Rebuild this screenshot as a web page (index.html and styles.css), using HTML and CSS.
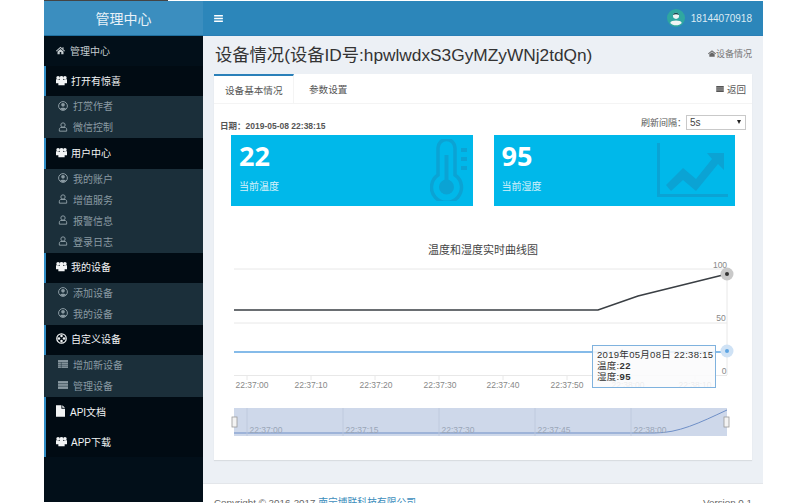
FILE: index.html
```html
<!DOCTYPE html>
<html lang="zh">
<head>
<meta charset="utf-8">
<title>设备情况</title>
<link rel="stylesheet" href="styles.css">
</head>
<body>
<svg class="defs" width="0" height="0">
  <symbol id="i-home" viewBox="0 0 12 12"><path d="M6 1 0 6.400l.8.8L6 2.800l5.200 4.400.8-.8-2-1.800V1.600H8.600v1.600zM2 7.400V11h3V8h2v3h3V7.400L6 4z" fill="currentColor"/></symbol>
  <symbol id="i-users" viewBox="0 0 14 12"><circle cx="2.600" cy="2.400" r="2.200" fill="currentColor"/><circle cx="11.400" cy="2.400" r="2.200" fill="currentColor"/><circle cx="7" cy="3" r="2.800" fill="currentColor"/><path d="M0 4.500h3.400v5H0zM10.600 4.500H14v5h-3.400zM3 5.500h8V12H3z" fill="currentColor"/></symbol>
  <symbol id="i-ucircle" viewBox="0 0 12 12"><circle cx="6" cy="6" r="5.300" fill="none" stroke="currentColor" stroke-width="1.200"/><circle cx="6" cy="4.600" r="2.200" fill="currentColor"/><path d="M2.400 9.600C3 7.600 9 7.600 9.600 9.600 8 11.200 4 11.200 2.400 9.600z" fill="currentColor"/></symbol>
  <symbol id="i-user" viewBox="0 0 12 12"><circle cx="6" cy="3.600" r="2.600" fill="none" stroke="currentColor" stroke-width="1.200"/><path d="M1.600 11V8.600c0-1.200 1-2 2-2h4.800c1 0 2 .8 2 2V11z" fill="none" stroke="currentColor" stroke-width="1.200"/></symbol>
  <symbol id="i-cube" viewBox="0 0 14 14"><circle cx="7" cy="7" r="6" fill="none" stroke="currentColor" stroke-width="1.600"/><circle cx="7" cy="3.800" r="1.600" fill="currentColor"/><circle cx="7" cy="10.200" r="1.600" fill="currentColor"/><circle cx="3.800" cy="7" r="1.600" fill="currentColor"/><circle cx="10.200" cy="7" r="1.600" fill="currentColor"/></symbol>
  <symbol id="i-table" viewBox="0 0 14 11"><path d="M0 0h14v11H0z" fill="currentColor"/><path d="M0 3.300h14M0 6h14M0 8.600h14M4.600 3v8" stroke="#1b2f3a" stroke-width=".7"/></symbol>
  <symbol id="i-list" viewBox="0 0 14 11"><path d="M0 0h14v11H0z" fill="currentColor"/><path d="M0 3.600h14M0 7.200h14" stroke="#1b2f3a" stroke-width=".8"/></symbol>
  <symbol id="i-file" viewBox="0 0 10 13"><path d="M0 0h6v4h4v9H0zM7 0l3 3H7z" fill="currentColor"/></symbol>
</svg>
<div class="topline"></div>
<div class="app">
  <aside class="side">
    <div class="logo">管理中心</div>
    <nav class="menu">
      <a class="item plain"><svg class="ic ic-home"><use href="#i-home"/></svg>管理中心</a>
      <a class="item head"><svg class="ic ic-users"><use href="#i-users"/></svg>打开有惊喜</a>
      <div class="sub">
        <a class="subitem"><svg class="ic"><use href="#i-ucircle"/></svg>打赏作者</a>
        <a class="subitem"><svg class="ic"><use href="#i-user"/></svg>微信控制</a>
      </div>
      <a class="item head"><svg class="ic ic-users"><use href="#i-users"/></svg>用户中心</a>
      <div class="sub">
        <a class="subitem"><svg class="ic"><use href="#i-ucircle"/></svg>我的账户</a>
        <a class="subitem"><svg class="ic"><use href="#i-user"/></svg>增值服务</a>
        <a class="subitem"><svg class="ic"><use href="#i-user"/></svg>报警信息</a>
        <a class="subitem"><svg class="ic"><use href="#i-user"/></svg>登录日志</a>
      </div>
      <a class="item head"><svg class="ic ic-users"><use href="#i-users"/></svg>我的设备</a>
      <div class="sub">
        <a class="subitem"><svg class="ic"><use href="#i-ucircle"/></svg>添加设备</a>
        <a class="subitem"><svg class="ic"><use href="#i-ucircle"/></svg>我的设备</a>
      </div>
      <a class="item head"><svg class="ic ic-users"><use href="#i-cube"/></svg>自定义设备</a>
      <div class="sub">
        <a class="subitem"><svg class="ic"><use href="#i-table"/></svg>增加新设备</a>
        <a class="subitem"><svg class="ic"><use href="#i-list"/></svg>管理设备</a>
      </div>
      <a class="item head"><svg class="ic ic-file"><use href="#i-file"/></svg>API文档</a>
      <a class="item head"><svg class="ic ic-users"><use href="#i-users"/></svg>APP下载</a>
    </nav>
  </aside>
  <div class="right">
    <header class="bar">
      <svg class="burger" viewBox="0 0 10 8"><path d="M0 0h10v1.600H0zM0 3.200h10v1.600H0zM0 6.400h10V8H0z" fill="#fff"/></svg>
      <div class="account">
        <svg class="avatar" viewBox="0 0 20 20"><circle cx="10" cy="10" r="10" fill="#2fa7a0"/><circle cx="10" cy="7.600" r="3.400" fill="#f0f4f4"/><path d="M3.600 15.600c.8-3.600 12-3.600 12.800 0-3 3.400-9.800 3.400-12.800 0z" fill="#f0f4f4"/><path d="M6.600 6.600C7 3.400 13 3.400 13.400 6.600 11 5.400 9 5.400 6.600 6.600z" fill="#17484f"/></svg>
        <span>18144070918</span>
      </div>
    </header>
    <main class="main">
      <div class="titlerow">
        <h1>设备情况(设备ID号:hpwlwdxS3GyMZyWNj2tdQn)</h1>
        <span class="crumb"><svg class="crumb-ic" viewBox="0 0 12 10"><path d="M6 0 0 5l1 1 5-4 5 4 1-1zM2 6v4h8V6L6 3z" fill="#666"/></svg>设备情况</span>
      </div>
      <section class="box">
        <div class="tabs">
          <a class="tab active">设备基本情况</a>
          <a class="tab">参数设置</a>
          <a class="back"><svg class="back-ic" viewBox="0 0 10 8"><path d="M0 0h10v8H0z" fill="#555"/><path d="M0 2.600h10M0 5.300h10" stroke="#fff" stroke-width=".6"/></svg>返回</a>
        </div>
        <div class="metaRow">
          <span class="date">日期：2019-05-08 22:38:15</span>
          <span class="refresh">刷新间隔：<span class="select">5s<i class="caret"></i></span></span>
        </div>
        <div class="cards">
          <div class="card">
            <b>22</b><span>当前温度</span>
            <svg class="card-ic thermo" viewBox="0 0 38 62"><path d="M8 36V9a8.500 8.500 0 0 1 17 0v27a15 15 0 1 1-17 0z" fill="none" stroke="#0ba3d4" stroke-width="3.500"/><circle cx="16.500" cy="48" r="7.500" fill="#0ba3d4"/><path d="M14.500 16h4v28h-4zM31 9h6v4h-6zM31 18h6v4h-6zM31 27h6v4h-6z" fill="#0ba3d4"/></svg>
          </div>
          <div class="card">
            <b>95</b><span>当前湿度</span>
            <svg class="card-ic trend" viewBox="0 0 71 54"><path d="M1.500 0v52.500H71" fill="none" stroke="#0ba3d4" stroke-width="3"/><path d="M9 42 26 25l13 11 16-20-5-6h17v17l-6-6-22 27-13-11-12 11z" fill="#0ba3d4"/></svg>
          </div>
        </div>
        <h2 class="charttitle">温度和湿度实时曲线图</h2>
        <div class="chart">
          <svg class="chart-svg" viewBox="0 0 538 240" width="538" height="240">
            <g class="grid"><path d="M20 3h493M20 57h493M20 109.500h493M513 3v106"/><path d="M33 109v5M97 109v5M161 109v5M225 109v5M289 109v5M353 109v5M417 109v5M481 109v5"/></g>
            <path d="M20 44H384L424 30 513 8" fill="none" stroke="#3a3f44" stroke-width="1.600"/>
            <path d="M20 86H513" fill="none" stroke="#5da4e2" stroke-width="1.600"/>
            <circle cx="513" cy="8" r="6.500" fill="#c9c9c9"/><circle cx="513" cy="8" r="2" fill="#333"/>
            <circle cx="513" cy="85" r="6.500" fill="#cfe2f5"/><circle cx="513" cy="85" r="2" fill="#5da4e2"/>
            <g class="axis">
              <text x="506" y="2" text-anchor="middle">100</text><text x="507" y="55" text-anchor="middle">50</text><text x="510" y="108" text-anchor="middle">0</text>
              <text x="38" y="122" text-anchor="middle">22:37:00</text><text x="97" y="122" text-anchor="middle">22:37:10</text><text x="162" y="122" text-anchor="middle">22:37:20</text><text x="226" y="122" text-anchor="middle">22:37:30</text><text x="289" y="122" text-anchor="middle">22:37:40</text><text x="353" y="122" text-anchor="middle">22:37:50</text><text x="414" y="122" text-anchor="middle">22:38:00</text><text x="481" y="122" text-anchor="middle">22:38:10</text>
            </g>
            <path d="M20 142h493v28H20z" fill="#ced8ea"/>
            <path d="M20 167H440C465 167 485 157 513 144" fill="none" stroke="#6e8fc7" stroke-width="1"/>
            <path d="M33 142v28M129 142v28M225 142v28M321 142v28M417 142v28" stroke="#bcc8dc" stroke-width=".8"/>
            <g class="axis zoomaxis">
              <text x="52" y="167" text-anchor="middle">22:37:00</text><text x="148" y="167" text-anchor="middle">22:37:15</text><text x="244" y="167" text-anchor="middle">22:37:30</text><text x="340" y="167" text-anchor="middle">22:37:45</text><text x="436" y="167" text-anchor="middle">22:38:00</text>
            </g>
            <rect x="18" y="151" width="5" height="10" fill="#f3f3f3" stroke="#999" stroke-width=".8"/>
            <rect x="510" y="151" width="5" height="10" fill="#f3f3f3" stroke="#999" stroke-width=".8"/>
          </svg>
          <div class="tooltip">2019年05月08日 22:38:15<br>温度:<b>22</b><br>湿度:<b>95</b></div>
        </div>
      </section>
    </main>
    <footer class="foot"><span>Copyright © 2016-2017 <a>南宁博联科技有限公司</a></span><span>Version 0.1</span></footer>
  </div>
</div>
</body>
</html>
```
FILE: styles.css
```css
html, body { margin: 0; padding: 0; height: 503px; overflow: hidden; background: #fff; }
body { font-family: "Liberation Sans", "Noto Sans CJK SC", sans-serif; color: #444; font-size: 10px; }
.defs { position: absolute; }
.topline { height: 1px; width: 124px; margin-left: 44px; background: #444; }
.app { display: flex; width: 719px; margin-left: 44px; height: 502px; }
.side { width: 159px; flex: none; display: flex; flex-direction: column; }
.logo { height: 35px; flex: none; box-sizing: border-box; background: #3b8ebf; color: #e8f2f8; font-size: 14px; display: flex; align-items: center; justify-content: center; border-bottom: 1px solid #1f6f9f; }
.menu { flex: 1; background: #020f19; margin-bottom: 1px; display: flex; flex-direction: column; }
.item { height: 30.200px; flex: none; display: flex; align-items: center; color: #f2f4f5; font-size: 10px; padding: 0 0 2px 12px; box-sizing: border-box; }
.plain { color: #c4ccd0; }
.head { border-left: 2px solid #2f8cc4; padding-left: 10px; background: #010b13; }
.ic { width: 10px; height: 10px; margin-right: 5px; flex: none; }
.ic-home { width: 9px; height: 9px; }
.ic-users { width: 11px; height: 11px; margin-right: 4px; }
.ic-file { width: 9px; height: 12px; margin-right: 5px; }
.sub { background: #1b2f3a; display: flex; flex-direction: column; }
.subitem { height: 21px; box-sizing: border-box; display: flex; align-items: center; color: #8a9aa2; font-size: 10px; padding: 0 0 2px 14px; }
.right { flex: 1; display: flex; flex-direction: column; min-width: 0; }
.bar { height: 34px; flex: none; background: #2c86ba; border-bottom: 1px solid #2a7fb6; display: flex; align-items: center; justify-content: space-between; padding: 0 11px; }
.burger { width: 9px; height: 7px; }
.account { display: flex; align-items: center; gap: 6px; color: #dcebf3; font-size: 10px; }
.avatar { width: 18px; height: 18px; }
.main { height: 448px; flex: none; background: #ecf0f5; padding: 0 11px; box-sizing: border-box; border-bottom: 1px solid #e3e6ea; }
.titlerow { height: 38px; box-sizing: border-box; padding-bottom: 3px; display: flex; align-items: center; justify-content: space-between; }
h1 { margin: 0 0 0 1px; font-size: 17.300px; font-weight: 400; color: #333; white-space: nowrap; }
.crumb { color: #777; font-size: 9px; display: flex; align-items: center; }
.crumb-ic { width: 8px; height: 7px; }
.box { background: #fff; height: 386px; box-shadow: 0 1px 1px rgba(0,0,0,.08); position: relative; }
.tabs { height: 30px; display: flex; align-items: stretch; border-bottom: 1px solid #f4f4f4; box-sizing: border-box; }
.tab { padding: 0 15px; display: flex; align-items: center; color: #555; font-size: 9.600px; white-space: nowrap; }
.tab.active { width: 80px; padding: 0 0 0 11px; border-top: 2px solid #2a80b9; border-right: 1px solid #f4f4f4; box-sizing: border-box; }
.back { margin-left: auto; display: flex; align-items: center; gap: 3px; padding-right: 6px; font-size: 9.500px; color: #555; }
.back-ic { width: 8px; height: 6px; }
.metaRow { height: 28px; display: flex; align-items: center; justify-content: space-between; padding: 8px 6px 0 6px; box-sizing: border-box; }
.date { margin-top: 6px; font-size: 8.500px; font-weight: 700; color: #555; }
.refresh { display: flex; align-items: center; color: #555; font-size: 9px; }
.select { width: 60px; height: 15px; box-sizing: border-box; border: 1px solid #c9c9c9; padding-left: 3px; font-size: 10px; color: #444; display: flex; align-items: center; position: relative; }
.caret { position: absolute; right: 4px; top: 4px; border-left: 2.500px solid transparent; border-right: 2.500px solid transparent; border-top: 4px solid #222; }
.cards { display: flex; gap: 21px; padding: 3px 0 0 17px; }
.card { width: 241.500px; height: 71px; background: #00b8ea; color: #fff; position: relative; box-sizing: border-box; padding: 7px 8px; display: flex; flex-direction: column; }
.card b { font-size: 27px; line-height: 28px; font-family: "Open Sans", "Liberation Sans", sans-serif; }
.card span { font-size: 10px; margin-top: 8px; color: #d6f2fb; }
.card-ic { position: absolute; }
.thermo { right: 5px; top: 4px; width: 38px; height: 62px; }
.trend { right: 7px; top: 8px; width: 71px; height: 54px; }
.charttitle { margin: 34px 0 0; text-align: center; font-size: 11px; font-weight: 400; color: #444; height: 20px; line-height: 20px; }
.chart { position: relative; height: 200px; }
.chart-svg { display: block; position: absolute; left: 0; top: 6px; overflow: visible; }
.grid path { stroke: #e8e8e8; stroke-width: 1; fill: none; }
.axis text { font-family: "Liberation Sans", sans-serif; font-size: 8.500px; fill: #888; }
.zoomaxis text { fill: #9aa6b8; }
.tooltip { position: absolute; left: 378px; top: 85px; width: 124px; height: 43px; box-sizing: border-box; padding: 3px 4px; font-size: 9.500px; line-height: 11px; letter-spacing: .3px; color: #333; background: rgba(250,251,252,.88); border: 1px solid #7fb2de; white-space: nowrap; }
.foot { display: flex; justify-content: space-between; align-items: baseline; padding: 11px 11px 0; color: #666; font-size: 9.800px; }
.foot a { color: #3c8dbc; }
```
